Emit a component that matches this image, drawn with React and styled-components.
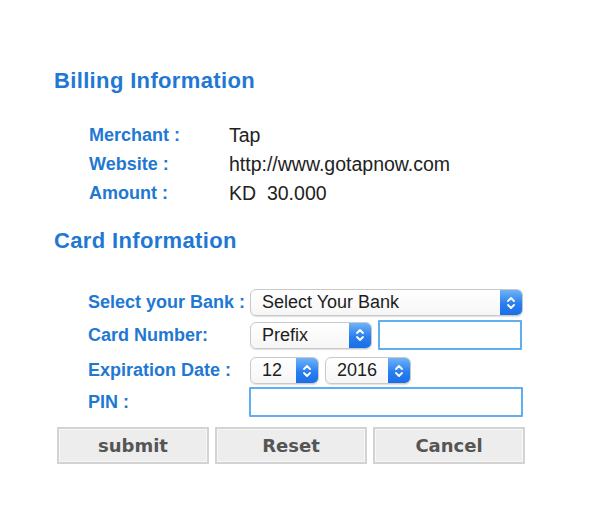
import React from "react";
import styled, { createGlobalStyle } from "styled-components";

const Global = createGlobalStyle`
  html, body { margin: 0; padding: 0; background: #ffffff; }
  body { font-family: "Liberation Sans", Arial, Helvetica, sans-serif; }
  * { box-sizing: border-box; }
`;

const Page = styled.div`
  width: 596px;
  height: 512px;
  padding: 68px 0 0 0;
  display: flex;
  flex-direction: column;
`;

const Heading = styled.h2`
  margin: ${(p) => p.$mt || 0}px 0 0 54px;
  font-size: 22px;
  line-height: 26px;
  font-weight: 700;
  color: #1f78d3;
  letter-spacing: 0.35px;
`;

const InfoList = styled.div`
  margin: 27px 0 0 89px;
  display: grid;
  grid-template-columns: 140px auto;
  grid-auto-rows: 29px;
  align-items: center;
`;

const InfoLabel = styled.div`
  font-size: 18px;
  font-weight: 700;
  color: #1f78d3;
`;

const InfoValue = styled.div`
  font-size: 19.5px;
  color: #222;
  white-space: pre;
`;

const Form = styled.div`
  margin: 35px 0 0 0;
  display: flex;
  flex-direction: column;
`;

const Row = styled.div`
  display: flex;
  align-items: center;
  height: ${(p) => p.$h}px;
  margin-top: ${(p) => p.$mt || 0}px;
`;

const Label = styled.div`
  width: 162px;
  margin-left: 88px;
  font-size: 18px;
  font-weight: 700;
  color: #1f78d3;
  white-space: nowrap;
`;

const Controls = styled.div`
  display: flex;
  align-items: center;
  gap: 6px;
`;

const SelectBox = styled.div`
  width: ${(p) => p.$w}px;
  height: ${(p) => p.$h || 27}px;
  display: flex;
  align-items: stretch;
  border-radius: 6px;
  background: linear-gradient(#ffffff, #f6f6f6);
  border: 1px solid #c9c9c9;
  box-shadow: 0 1px 1px rgba(0, 0, 0, 0.12);
  overflow: hidden;
`;

const SelectText = styled.div`
  flex: 1;
  display: flex;
  align-items: center;
  padding-left: 11px;
  font-size: 18px;
  color: #1d1d1d;
  white-space: nowrap;
`;

const ArrowBox = styled.div`
  width: 22px;
  display: flex;
  align-items: center;
  justify-content: center;
  background: linear-gradient(#6fb4f7, #2a7ef0 55%, #1a6fe6);
`;

const TextInput = styled.input`
  width: ${(p) => p.$w}px;
  height: 30px;
  margin: 0 0 0 ${(p) => p.$ml || 0}px;
  border: 2px solid #5eaef0;
  border-radius: 1px;
  background: #fff;
  outline: none;
  padding: 0 6px;
  font-size: 16px;
`;

const Buttons = styled.div`
  margin: 10px 0 0 57px;
  display: flex;
  gap: 6px;
`;

const Button = styled.button`
  width: 152px;
  height: 37px;
  margin: 0;
  padding: 0;
  background: #ededed;
  border: 2px solid #d3d3d3;
  box-shadow: inset 0 0 0 1px #f7f7f7;
  font-family: "DejaVu Sans", Verdana, sans-serif;
  font-size: 18px;
  font-weight: 700;
  color: #555;
`;

const Arrows = () => (
  <svg width="10" height="16" viewBox="0 0 10 16">
    <path d="M2 6 L5 3 L8 6" fill="none" stroke="#fff" strokeWidth="1.8" strokeLinecap="round" strokeLinejoin="round" />
    <path d="M2 10 L5 13 L8 10" fill="none" stroke="#fff" strokeWidth="1.8" strokeLinecap="round" strokeLinejoin="round" />
  </svg>
);

const Select = ({ w, h, children }) => (
  <SelectBox $w={w} $h={h}>
    <SelectText>{children}</SelectText>
    <ArrowBox>
      <Arrows />
    </ArrowBox>
  </SelectBox>
);

export default function App() {
  return (
    <>
      <Global />
      <Page>
        <Heading>Billing Information</Heading>
        <InfoList>
          <InfoLabel>Merchant :</InfoLabel>
          <InfoValue>Tap</InfoValue>
          <InfoLabel>Website :</InfoLabel>
          <InfoValue>http://www.gotapnow.com</InfoValue>
          <InfoLabel>Amount :</InfoLabel>
          <InfoValue>KD  30.000</InfoValue>
        </InfoList>
        <Heading $mt={20}>Card Information</Heading>
        <Form>
          <Row $h={27}>
            <Label>Select your Bank :</Label>
            <Controls>
              <Select w={273}>Select Your Bank</Select>
            </Controls>
          </Row>
          <Row $h={30} $mt={4}>
            <Label>Card Number:</Label>
            <Controls>
              <Select w={122}>Prefix</Select>
              <TextInput $w={144} />
            </Controls>
          </Row>
          <Row $h={27} $mt={7}>
            <Label>Expiration Date :</Label>
            <Controls>
              <Select w={69}>12</Select>
              <Select w={86}>2016</Select>
            </Controls>
          </Row>
          <Row $h={30} $mt={3}>
            <Label>PIN :</Label>
            <Controls>
              <TextInput $w={274} $ml={-1} />
            </Controls>
          </Row>
        </Form>
        <Buttons>
          <Button>submit</Button>
          <Button>Reset</Button>
          <Button>Cancel</Button>
        </Buttons>
      </Page>
    </>
  );
}
